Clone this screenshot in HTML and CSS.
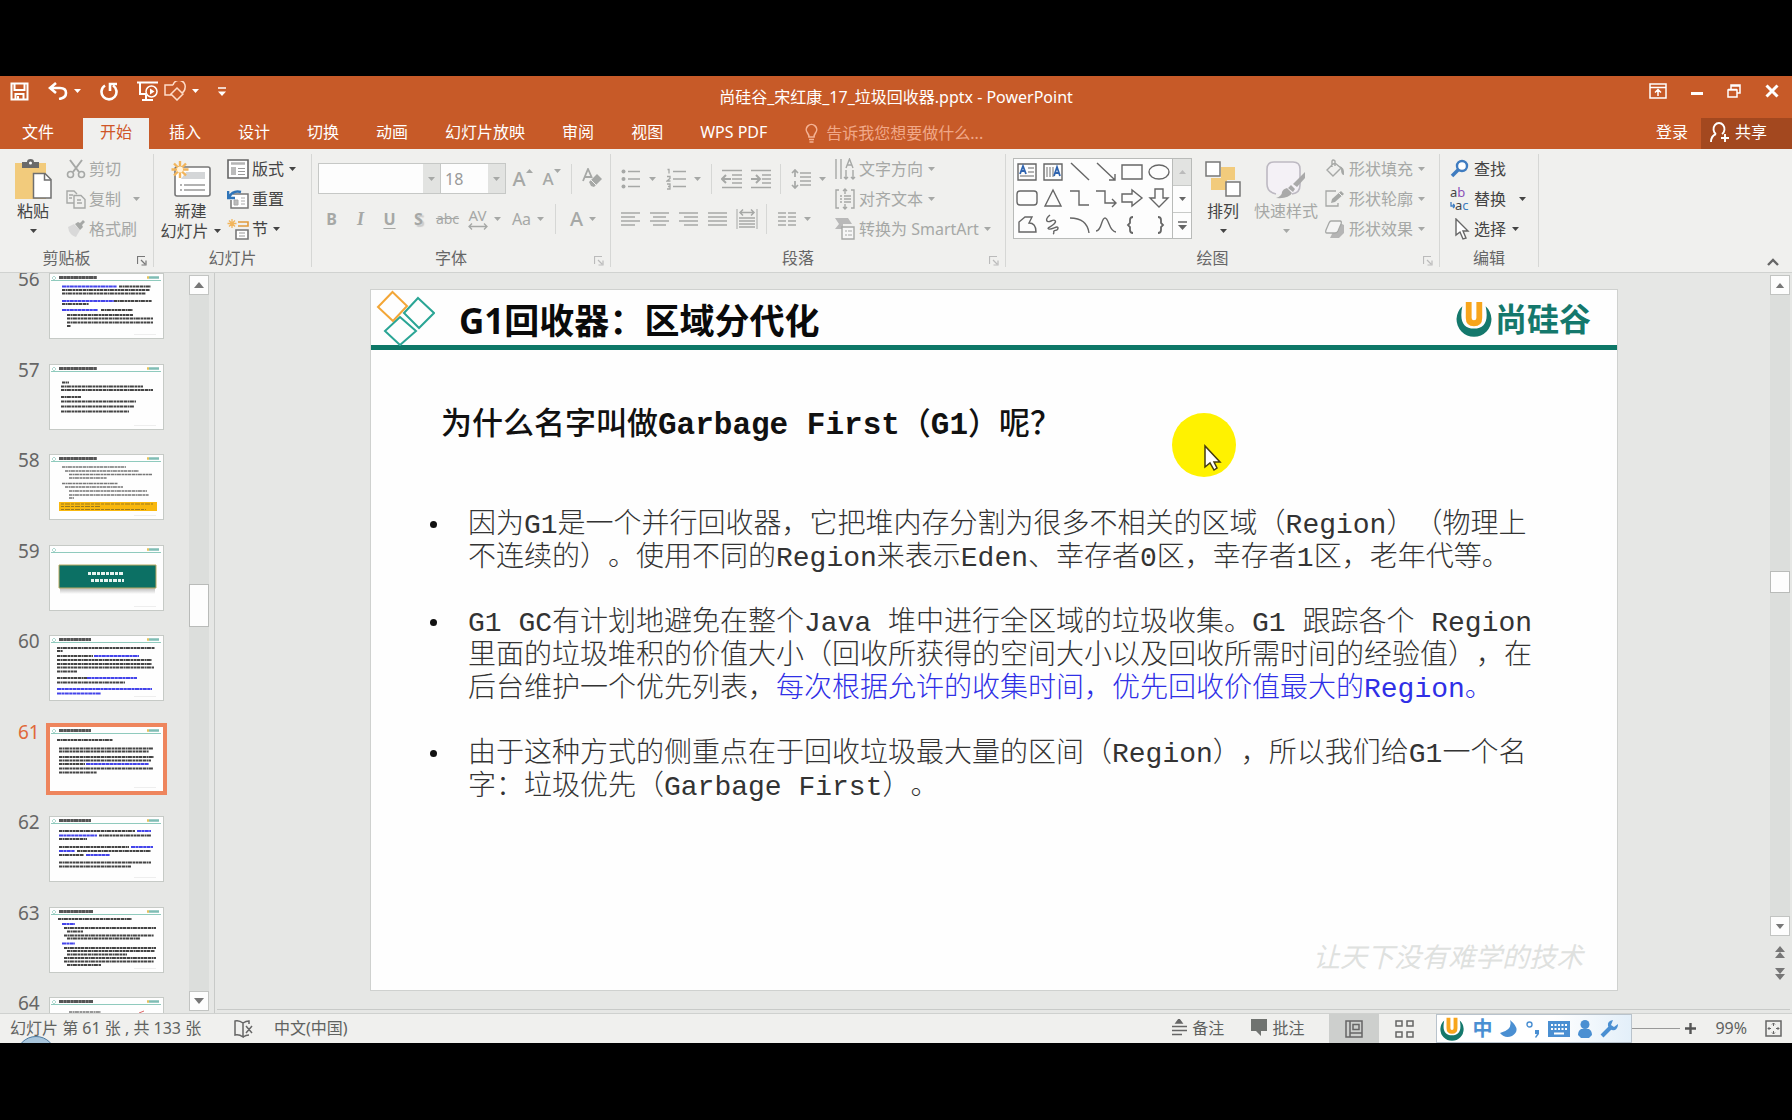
FILE: index.html
```html
<!DOCTYPE html>
<html lang="zh-CN">
<head>
<meta charset="utf-8">
<title>尚硅谷_宋红康_17_垃圾回收器.pptx - PowerPoint</title>
<link rel="stylesheet" href="styles.css">
</head>
<body>
<svg class="defs" aria-hidden="true">
  <symbol id="caret" viewBox="0 0 7 4"><path d="M0 0h7L3.500 4z" fill="currentColor"/></symbol>
  <symbol id="launch" viewBox="0 0 10 10"><path d="M.5 8V.5H8M4 4l4 4M9 4.500V9H4.500" fill="none" stroke="currentColor" stroke-width="1.200"/></symbol>
  <symbol id="tri-up" viewBox="0 0 10 6"><path d="M0 6h10L5 0z" fill="currentColor"/></symbol>
  <symbol id="tri-down" viewBox="0 0 10 6"><path d="M0 0h10L5 6z" fill="currentColor"/></symbol>
  <symbol id="ulogo" viewBox="0 0 34 34"><path d="M6 5A16.500 16.500 0 1 0 28 5C31 19 27 26 17 26S3 19 6 5z" fill="#14786c"/><path d="M12 1v15q0 5 5 5t5-5V1" fill="none" stroke="#f7a51c" stroke-width="5.500"/></symbol>
  <symbol id="thead" viewBox="0 0 115 66"><path d="M2 7.500h110" stroke="#8fcabd"/><path d="M3 5l2-2 2 2-2 2z" fill="none" stroke="#8fcabd" stroke-width=".7"/><path d="M98 4.500h2" stroke="#e3c25a" stroke-width="2.500"/><path d="M100 4.500h10" stroke="#7fbdb4" stroke-width="2.500"/><path d="M85 61.500h22" stroke="#eee"/></symbol>
</svg>

<div class="app">
  <header class="titlebar">
    <div class="qat">
      <button aria-label="保存"><svg width="19" height="19" viewBox="0 0 19 19"><path d="M1.500 1.500h16v16h-16zM4.500 2v6h10V2M5.500 17v-5h8v5M8 14v3" fill="none" stroke="#fff" stroke-width="2"/></svg></button>
      <div class="pair">
        <button aria-label="撤消"><svg width="20" height="18" viewBox="0 0 20 18"><path d="M8 1L2 6l6 5M2 6h10q6 0 6 5t-7 6" fill="none" stroke="#fff" stroke-width="2.600"/></svg></button>
        <svg class="caret"><use href="#caret"/></svg>
      </div>
      <button aria-label="重复"><svg width="18" height="19" viewBox="0 0 18 19"><path d="M5 3.500a7.500 7.500 0 1 0 8 0M10 9V2h7" fill="none" stroke="#fff" stroke-width="2.600"/></svg></button>
      <div class="pair">
        <button aria-label="从头开始"><svg width="21" height="20" viewBox="0 0 21 20"><path d="M0 1.500h21M3 2v11h6M9 14v4M5 19h11" fill="none" stroke="#fff" stroke-width="2"/><circle cx="14.500" cy="10.500" r="5.500" fill="#c75a28" stroke="#fff" stroke-width="1.500"/><path d="M13 7.500v6l4.500-3z" fill="#fff"/></svg></button>
        <button aria-label="形状"><svg width="22" height="20" viewBox="0 0 22 20"><path d="M8 14H1V4h8M9 4a6 6 0 0 1 12 3q0 3-3 5M13 7l6 6-6 6-6-6z" fill="none" stroke="#ffdcc8" stroke-width="1.500"/></svg></button>
        <svg class="caret"><use href="#caret"/></svg>
      </div>
      <button aria-label="自定义快速访问工具栏"><svg width="8" height="9" viewBox="0 0 8 9"><path d="M0 1h8" stroke="#fff" stroke-width="1.500"/><path d="M0 4.500h8L4 9z" fill="#fff"/></svg></button>
    </div>
    <h1 class="doc-title">尚硅谷_宋红康_17_垃圾回收器.pptx - PowerPoint</h1>
    <div class="win-buttons">
      <button aria-label="功能区显示选项"><svg width="18" height="16" viewBox="0 0 18 16"><path d="M1 1h16v14H1zM1 4.500h16M9 13V7M6 9.500l3-3 3 3" fill="none" stroke="#fff" stroke-width="1.500"/></svg></button>
      <button aria-label="最小化"><svg width="12" height="16" viewBox="0 0 12 16"><path d="M0 10.500h12" stroke="#fff" stroke-width="3"/></svg></button>
      <button aria-label="还原"><svg width="14" height="14" viewBox="0 0 14 14"><path d="M1 6h9v7H1zM1 5.500h9M4 5V1h9v8h-3M4 2h9" fill="none" stroke="#fff" stroke-width="1.500"/></svg></button>
      <button aria-label="关闭"><svg width="14" height="14" viewBox="0 0 14 14"><path d="M1.500 1.500l11 11M12.500 1.500l-11 11" stroke="#fff" stroke-width="3"/></svg></button>
    </div>
  </header>

  <nav class="tabs">
    <button class="tab file">文件</button>
    <button class="tab active">开始</button>
    <button class="tab">插入</button>
    <button class="tab">设计</button>
    <button class="tab">切换</button>
    <button class="tab">动画</button>
    <button class="tab">幻灯片放映</button>
    <button class="tab">审阅</button>
    <button class="tab">视图</button>
    <button class="tab">WPS PDF</button>
    <label class="tell">
      <svg width="13" height="20" viewBox="0 0 13 20"><path d="M4 14q0-2-1.500-4a5.200 5.200 0 1 1 8 0Q9 12 9 14zM4 16.500h5M4.500 19h4" fill="none" stroke="#f4b294" stroke-width="1.600"/></svg>
      <input type="text" placeholder="告诉我您想要做什么..." aria-label="告诉我您想要做什么">
    </label>
    <button class="login">登录</button>
    <button class="share"><svg width="20" height="22" viewBox="0 0 20 22"><path d="M1 21q0-6 5-8M6 13a5.500 6 0 1 1 6 0M15 13v8M11 17h8" fill="none" stroke="#fff" stroke-width="1.900"/></svg>共享</button>
  </nav>

  <section class="ribbon">
    <div class="group clipboard">
      <div class="group-body">
        <button class="big"><svg width="38" height="40" viewBox="0 0 38 40"><path d="M1 4h31v37H1z" fill="#f2cb7c"/><path d="M8 3h5q0-3 3.500-3T20 3h5v6H8z" fill="#6a6a6a"/><circle cx="16.500" cy="4" r="1.500" fill="#fff"/><path d="M19.500 14.500H31l6 6V39H19.500z" fill="#fff" stroke="#6f6f6f" stroke-width="1.500"/><path d="M30.500 15v6H37" fill="none" stroke="#6f6f6f" stroke-width="1.500"/></svg><span>粘贴</span><span class="drop"><svg class="caret"><use href="#caret"/></svg></span></button>
        <div class="smalls">
          <button class="small off"><svg width="20" height="20" viewBox="0 0 20 20"><path d="M4 1l9 12M16 1L7 13" fill="none" stroke="currentColor" stroke-width="2"/><circle cx="4.500" cy="15.500" r="3" fill="none" stroke="currentColor" stroke-width="1.600"/><circle cx="15.500" cy="15.500" r="3" fill="none" stroke="currentColor" stroke-width="1.600"/></svg>剪切</button>
          <button class="small off spread"><svg width="20" height="20" viewBox="0 0 20 20"><path d="M8 14H1V2h7l3 3M8 6.500h7l4 4V19H8zM3 6h4M3 9h3M11 11h4M11 14h5" fill="none" stroke="currentColor" stroke-width="1.400"/></svg>复制<svg class="caret"><use href="#caret"/></svg></button>
          <button class="small off"><svg width="20" height="20" viewBox="0 0 20 20"><path d="M2 8l6-3 6 6-4 7q-7-2-8-10z" fill="#d9d9d9"/><path d="M9 5l5 6 3-3-1-2 3-3-2-2-3 3-2-1z" fill="currentColor"/></svg>格式刷</button>
        </div>
      </div>
      <div class="group-label"><span>剪贴板</span><svg class="launch dark"><use href="#launch"/></svg></div>
    </div>

    <div class="group slides">
      <div class="group-body">
        <button class="big"><svg width="40" height="36" viewBox="0 0 40 36"><rect x="4" y="6" width="35" height="29" rx="2" fill="#fff" stroke="#777" stroke-width="1.600"/><path d="M15 11h19v7H10z" fill="#d4d6d8"/><path d="M9 24h2M13 24h21M9 29h2M13 29h21" stroke="#999" stroke-width="1.400"/><path d="M9 0v17M.5 8.500h17M3 2.500l12 12M15 2.500l-12 12" stroke="#f2b55c" stroke-width="2.400"/><circle cx="9" cy="8.500" r="3" fill="#fff3dc"/></svg><span>新建</span><span class="drop">幻灯片<svg class="caret"><use href="#caret"/></svg></span></button>
        <div class="smalls">
          <button class="small"><svg width="22" height="20" viewBox="0 0 22 20"><path d="M1 1h20v18H1z" fill="#fff" stroke="#666" stroke-width="1.600"/><path d="M4 4.500h14" stroke="#b5b5b5" stroke-width="2.500"/><path d="M4 8h5v8H4z" fill="#bbb"/><path d="M11 9.500h7M11 12.500h7M11 15.500h7" stroke="#999" stroke-width="1.200"/></svg>版式<svg class="caret"><use href="#caret"/></svg></button>
          <button class="small"><svg width="22" height="20" viewBox="0 0 22 20"><path d="M6 5h15v14H4v-8" fill="#fff" stroke="#777" stroke-width="1.500"/><path d="M7 11h4v5H7zM14 9h4M14 12h4M14 15h4" fill="#bbb" stroke="#aaa"/><path d="M1 2v7h7M2 8q4-7 12-5" fill="none" stroke="#2f74b8" stroke-width="2.600"/></svg>重置</button>
          <button class="small"><svg width="22" height="22" viewBox="0 0 22 22"><path d="M5 1v9M.5 5.500h9M2 2.500l6 6M8 2.500l-6 6" stroke="#f2b55c" stroke-width="1.300"/><path d="M11 4h10v4H11" fill="none" stroke="#e09a3c" stroke-width="1.600"/><path d="M9 12h12v9H9z" fill="#fff" stroke="#777" stroke-width="1.600"/><path d="M12 15h6M12 18h6" stroke="#999"/></svg>节<svg class="caret"><use href="#caret"/></svg></button>
        </div>
      </div>
      <div class="group-label"><span>幻灯片</span></div>
    </div>

    <div class="group font">
      <div class="group-body rows off">
        <div class="row">
          <label class="combo face"><select aria-label="字体"><option></option></select><span><svg class="caret"><use href="#caret"/></svg></span></label>
          <label class="combo size"><select aria-label="字号"><option>18</option></select><span><svg class="caret"><use href="#caret"/></svg></span></label>
          <button class="fb" aria-label="增大字号"><b class="grow">A</b><svg class="caret raise" viewBox="0 0 7 4"><path d="M0 4h7L3.500 0z" fill="currentColor"/></svg></button>
          <button class="fb" aria-label="减小字号"><b class="shrink">A</b><svg class="caret raise"><use href="#caret"/></svg></button>
          <i class="sep"></i>
          <button class="fb" aria-label="清除所有格式"><svg width="22" height="22" viewBox="0 0 22 22"><path d="M2 13L7 1l4 9M4 9h6" fill="none" stroke="currentColor" stroke-width="1.800"/><path d="M8 14l8-8 5 5-8 8-3-1z" fill="currentColor"/><path d="M10 12l5 5" stroke="#f0f0ee"/></svg></button>
        </div>
        <div class="row marks">
          <button class="fb"><b>B</b></button>
          <button class="fb"><i class="ital">I</i></button>
          <button class="fb"><b class="under">U</b></button>
          <button class="fb"><b class="shadow">S</b></button>
          <button class="fb"><s>abc</s></button>
          <button class="fb wide"><span class="spacing">AV<svg width="20" height="7" viewBox="0 0 20 7"><path d="M1 3.500h18M4 .5l-3 3 3 3M16 .5l3 3-3 3" fill="none" stroke="currentColor" stroke-width="1.300"/></svg></span><svg class="caret"><use href="#caret"/></svg></button>
          <button class="fb wide">Aa<svg class="caret"><use href="#caret"/></svg></button>
          <i class="sep"></i>
          <button class="fb wide"><b class="grow">A</b><svg class="caret"><use href="#caret"/></svg></button>
        </div>
      </div>
      <div class="group-label"><span>字体</span><svg class="launch"><use href="#launch"/></svg></div>
    </div>

    <div class="group para">
      <div class="group-body off">
        <div class="rows">
          <div class="row">
            <button class="pb list" aria-label="项目符号"><svg width="20" height="20" viewBox="0 0 20 20"><path d="M7 2.500h12M7 10h12M7 17.500h12" stroke="currentColor" stroke-width="1.500"/><circle cx="2.500" cy="2.500" r="2" fill="currentColor"/><circle cx="2.500" cy="10" r="2" fill="currentColor"/><circle cx="2.500" cy="17.500" r="2" fill="currentColor"/></svg><svg class="caret"><use href="#caret"/></svg></button>
            <button class="pb list" aria-label="编号"><svg width="20" height="22" viewBox="0 0 20 22"><path d="M7 3.500h13M7 11h13M7 18.500h13M1.500 1.500H3v4M1 8.500h3v2L1 13h3.500M1 16h3v5H1M2 18.500h2" fill="none" stroke="currentColor" stroke-width="1.300"/></svg><svg class="caret"><use href="#caret"/></svg></button>
            <i class="sep"></i>
            <button class="pb" aria-label="降低列表级别"><svg width="22" height="20" viewBox="0 0 22 20"><path d="M1 1.500h20M11 6h10M11 10h10M11 14h10M1 18.500h20" stroke="currentColor" stroke-width="1.500"/><path d="M10 10H2M5 6l-4 4 4 4" fill="none" stroke="currentColor" stroke-width="2"/></svg></button>
            <button class="pb" aria-label="提高列表级别"><svg width="22" height="20" viewBox="0 0 22 20"><path d="M1 1.500h20M12 6h9M12 10h9M12 14h9M1 18.500h20" stroke="currentColor" stroke-width="1.500"/><path d="M1 10h8M6 6l4 4-4 4" fill="none" stroke="currentColor" stroke-width="2"/></svg></button>
            <i class="sep"></i>
            <button class="pb list" aria-label="行距"><svg width="20" height="20" viewBox="0 0 20 20"><path d="M9 4h11M9 8h11M9 12h11M9 16h11" stroke="currentColor" stroke-width="1.400"/><path d="M4 1v7M1 4l3-3 3 3M4 19v-7M1 16l3 3 3-3" fill="none" stroke="currentColor" stroke-width="1.700"/></svg><svg class="caret"><use href="#caret"/></svg></button>
          </div>
          <div class="row">
            <button class="pb" aria-label="左对齐"><svg width="20" height="14" viewBox="0 0 20 14"><path d="M0 1h19M0 5h14M0 9h19M0 13h14" stroke="currentColor" stroke-width="1.500"/></svg></button>
            <button class="pb" aria-label="居中"><svg width="20" height="14" viewBox="0 0 20 14"><path d="M0 1h19M3 5h13M0 9h19M3 13h13" stroke="currentColor" stroke-width="1.500"/></svg></button>
            <button class="pb" aria-label="右对齐"><svg width="20" height="14" viewBox="0 0 20 14"><path d="M0 1h19M5 5h14M0 9h19M5 13h14" stroke="currentColor" stroke-width="1.500"/></svg></button>
            <button class="pb" aria-label="两端对齐"><svg width="20" height="14" viewBox="0 0 20 14"><path d="M0 1h19M0 5h19M0 9h19M0 13h19" stroke="currentColor" stroke-width="1.500"/></svg></button>
            <button class="pb" aria-label="分散对齐"><svg width="22" height="20" viewBox="0 0 22 20"><path d="M1 0v20M21 0v20" stroke="currentColor"/><path d="M4 3.500h14M7 .5l-3 3 3 3M15 .5l3 3-3 3M3 9h16M3 12h16M3 15h16M3 18h16" fill="none" stroke="currentColor" stroke-width="1.500"/></svg></button>
            <i class="sep"></i>
            <button class="pb list" aria-label="分栏"><svg width="18" height="14" viewBox="0 0 18 14"><path d="M0 1h8M0 5h8M0 9h8M0 13h8M10 1h8M10 5h8M10 9h8M10 13h8" stroke="currentColor" stroke-width="1.500"/></svg><svg class="caret"><use href="#caret"/></svg></button>
          </div>
        </div>
        <div class="smalls">
          <button class="small off"><svg width="20" height="22" viewBox="0 0 20 22"><path d="M1 1v20M6 1v20M11 12v9M18 12v9M9 19l2 2 2-2M16 19l2 2 2-2M11 10l3.500-9L18 10M12 7h5" fill="none" stroke="currentColor" stroke-width="1.400"/></svg>文字方向<svg class="caret"><use href="#caret"/></svg></button>
          <button class="small off"><svg width="20" height="22" viewBox="0 0 20 22"><path d="M4 2H1v18h3M16 2h3v18h-3M5 8h2M9 8h7M5 11h2M9 11h7M5 14h2M9 14h7M10 6V1M8 3l2-2 2 2M10 16v5M8 19l2 2 2-2" fill="none" stroke="currentColor" stroke-width="1.400"/></svg>对齐文本<svg class="caret"><use href="#caret"/></svg></button>
          <button class="small off"><svg width="20" height="22" viewBox="0 0 20 22"><path d="M0 0h13l4 6H8v5H0l4-5z" fill="#b9b9b9"/><path d="M7 9h12v12H7z" fill="#f6f6f6" stroke="currentColor" stroke-width="1.400"/><path d="M10 13h2M13 13h4M10 17h2M13 17h4" stroke="currentColor"/></svg>转换为 SmartArt<svg class="caret"><use href="#caret"/></svg></button>
        </div>
      </div>
      <div class="group-label"><span>段落</span><svg class="launch"><use href="#launch"/></svg></div>
    </div>

    <div class="group draw">
      <div class="group-body">
        <div class="gallery">
          <div class="shapes">
            <svg viewBox="0 0 26 26"><path d="M4 5h18v16H4z"/><path d="M14 9h6M14 13h6M6 17h14" stroke="#999"/><path d="M6 15l3-8 3 8M7 12h4" stroke="#2f64b0" stroke-width="1.800"/></svg>
            <svg viewBox="0 0 26 26"><path d="M4 5h18v16H4z"/><path d="M7 8v10M10 8v10M13 8v10" stroke="#999"/><path d="M14 17l3-9 3 9M15 14h4" stroke="#2f64b0" stroke-width="1.800"/></svg>
            <svg viewBox="0 0 26 26"><path d="M4 4l18 17"/></svg>
            <svg viewBox="0 0 26 26"><path d="M4 4l18 17M22 15v6h-6"/></svg>
            <svg viewBox="0 0 26 26"><path d="M3 6h20v14H3z"/></svg>
            <svg viewBox="0 0 26 26"><ellipse cx="13" cy="13" rx="10" ry="7"/></svg>
            <svg viewBox="0 0 26 26"><rect x="3" y="6" width="20" height="14" rx="3"/></svg>
            <svg viewBox="0 0 26 26"><path d="M13 5l8 16H5z"/></svg>
            <svg viewBox="0 0 26 26"><path d="M3 6h9v14h10"/></svg>
            <svg viewBox="0 0 26 26"><path d="M3 6h9v12h10M19 14l4 4-4 4"/></svg>
            <svg viewBox="0 0 26 26"><path d="M3 9h10V5l10 8-10 8v-4H3z"/></svg>
            <svg viewBox="0 0 26 26"><path d="M9 4h8v9h5l-9 9-9-9h5z"/></svg>
            <svg viewBox="0 0 26 26"><path d="M5 20V10l6-5h7l-3 6q7 0 7 9z"/></svg>
            <svg viewBox="0 0 26 26"><path d="M10 3C4 8 7 11 11 9s6 0 3 3-8 4-5 5 9-4 9-1-3 2-4 3 1 2-1 3"/></svg>
            <svg viewBox="0 0 26 26"><path d="M3 6q17 0 19 15"/></svg>
            <svg viewBox="0 0 26 26"><path d="M3 19C9 19 8 6 12 6s4 14 11 14"/></svg>
            <svg viewBox="0 0 26 26"><path d="M14 5q-3 0-3 3v3l-2 2 2 2v3q0 3 3 3" stroke-width="1.800"/></svg>
            <svg viewBox="0 0 26 26"><path d="M12 5q3 0 3 3v3l2 2-2 2v3q0 3-3 3" stroke-width="1.800"/></svg>
          </div>
          <div class="gal-scroll">
            <button class="dim" aria-label="上一行"><svg class="caret" viewBox="0 0 7 4"><path d="M0 4h7L3.500 0z" fill="currentColor"/></svg></button>
            <button aria-label="下一行"><svg class="caret"><use href="#caret"/></svg></button>
            <button aria-label="其他"><svg width="9" height="9" viewBox="0 0 9 9"><path d="M0 1h9" stroke="#666" stroke-width="1.500"/><path d="M0 4h9L4.500 9z" fill="#666"/></svg></button>
          </div>
        </div>
        <button class="big arrange"><svg width="36" height="36" viewBox="0 0 36 36"><path d="M16 6h14v13h-8v10H6V17h10z" fill="#f2cb7c"/><path d="M1 1h14v14H1zM21 21h14v14H21z" fill="#fff" stroke="#777" stroke-width="1.500"/></svg><span>排列</span><span class="drop"><svg class="caret"><use href="#caret"/></svg></span></button>
        <button class="big quick off"><svg width="40" height="38" viewBox="0 0 40 38"><path d="M10 34q-9-2-9-10V9q0-7 7-7h19q7 0 7 7v16q0 8-8 9" fill="#f4f1f6" stroke="#bdb9c2" stroke-width="1.600"/><path d="M39 12L27 24l4 3 8-9z" fill="#a9a9a9"/><path d="M25 25l4 4-2 3-5-4zM21 28l5 5q-3 6-16 5 6-2 6-6 1-3 5-4z" fill="#a9a9a9"/></svg><span>快速样式</span><span class="drop"><svg class="caret"><use href="#caret"/></svg></span></button>
        <div class="smalls">
          <button class="small off"><svg width="22" height="20" viewBox="0 0 22 20"><path d="M9 5L3 11l6 6 8-8-6-5zM8 8V2q1-2 3 0v5" fill="none" stroke="currentColor" stroke-width="1.400"/><path d="M15 7q6 1 5 9-3 0-3-6z" fill="currentColor"/></svg>形状填充<svg class="caret"><use href="#caret"/></svg></button>
          <button class="small off"><svg width="22" height="20" viewBox="0 0 22 20"><path d="M12 2H2v15h12v-3" fill="none" stroke="currentColor" stroke-width="1.300"/><path d="M7 14l1-4 9-8 3 3-9 8z" fill="currentColor"/><path d="M15 4l3 3" stroke="#f0f0ee"/></svg>形状轮廓<svg class="caret"><use href="#caret"/></svg></button>
          <button class="small off"><svg width="22" height="20" viewBox="0 0 22 20"><path d="M14 3l6 3v8l-5 5H6z" fill="#b5b5b5"/><path d="M7 2h9q2 0 1 3l-3 7q-1 2-3 2H3q-2 0-1-3l3-7q1-2 2-2z" fill="#f4f4f4" stroke="currentColor" stroke-width="1.300"/></svg>形状效果<svg class="caret"><use href="#caret"/></svg></button>
        </div>
      </div>
      <div class="group-label"><span>绘图</span><svg class="launch"><use href="#launch"/></svg></div>
    </div>

    <div class="group edit">
      <div class="group-body">
        <div class="smalls">
          <button class="small"><svg width="20" height="20" viewBox="0 0 20 20"><circle cx="12" cy="7" r="5" fill="#fff" stroke="#3f7cc0" stroke-width="2.400"/><path d="M8.500 10.500L2 17" stroke="#3f7cc0" stroke-width="3.600"/></svg>查找</button>
          <button class="small spread"><span class="abac"><span>a<em>b</em></span><span><svg width="5" height="7" viewBox="0 0 5 7"><path d="M1 0v4h3M3 2l2 2-2 2" fill="none" stroke="#3f7cc0" stroke-width="1.300"/></svg>a<em>c</em></span></span>替换<svg class="caret"><use href="#caret"/></svg></button>
          <button class="small"><svg width="20" height="22" viewBox="0 0 20 22"><path d="M6 1v16l4-3 3 7 3-1-3-7h5z" fill="#fff" stroke="#666" stroke-width="1.400"/></svg>选择<svg class="caret"><use href="#caret"/></svg></button>
        </div>
      </div>
      <div class="group-label"><span>编辑</span></div>
    </div>
    <button class="collapse" aria-label="折叠功能区"><svg width="12" height="8" viewBox="0 0 12 8"><path d="M1 7l5-5 5 5" fill="none" stroke="#666" stroke-width="2.400"/></svg></button>
  </section>

  <main class="work">
    <aside class="thumbs">
      <div class="thumb-view">
        <ol class="thumb-list">
          <li><span>56</span><svg viewBox="0 0 115 66"><use href="#thead"/><path class="th" d="M10 4.500h38"/><path class="tb" d="M13 13.500h55M13 28h54M13 37h36"/><path class="tk" d="M70 13.500h32M13 17h88M13 20.500h84M65 28h38M13 31h27M52 37h32M18 42h66M18 45.500h86M18 49.500h86M18 53h4"/></svg></li>
          <li><span>57</span><svg viewBox="0 0 115 66"><use href="#thead"/><path class="th" d="M10 4.500h38"/><path class="tk" d="M13 18.500h7M12 22.500h82M12 26h92M12 33h20M12 37.500h75M12 42.500h73M12 47.500h68"/></svg></li>
          <li><span>58</span><svg viewBox="0 0 115 66"><use href="#thead"/><path class="th" d="M10 4.500h38"/><path class="tk thin" d="M13 13h64M16 17h74M20 20.500h83M20 24h38M13 29.500h56M16 33h58M20 37h78M20 41h80M20 44h5"/><path d="M10 48h98v9H10z" fill="#f9b80e"/><path class="tg" d="M12 50h92M12 52.500h40M12 55.500h85"/></svg></li>
          <li><span>59</span><svg viewBox="0 0 115 66"><defs><linearGradient id="fade" x2="0" y2="1"><stop stop-color="#bbb"/><stop offset="1" stop-color="#fefefe"/></linearGradient></defs><use href="#thead"/><path d="M11 43h95v6H11z" fill="url(#fade)"/><path d="M10 20h97v23H10z" fill="#0c7064" stroke="#b8a860"/><path class="tw" d="M39 28.500h36M42 35.500h33"/></svg></li>
          <li><span>60</span><svg viewBox="0 0 115 66"><use href="#thead"/><path class="th" d="M10 4.500h32"/><path class="tk" d="M8 13h98M8 16h6M8 21h36M8 25h95M8 29h95M8 32.500h97M8 36.500h20M8 43h30M8 47.500h68"/><path class="tb" d="M45 21h45M38 43h50M8 54h95M8 58.500h44"/></svg></li>
          <li class="current"><span>61</span><svg viewBox="0 0 115 66"><use href="#thead"/><path class="th" d="M10 4.500h32"/><path class="tk" d="M8 14h56M10 22.500h94M10 25.500h90M10 31h95M10 34.500h92M10 38h26M10 42.500h94M10 46.500h38"/><path class="tb" d="M37 38h63"/></svg></li>
          <li><span>62</span><svg viewBox="0 0 115 66"><use href="#thead"/><path class="th" d="M10 4.500h32"/><path class="tk" d="M10 15h76M50 19.500h52M10 23h28M10 31h70M28 35h74M10 39h25M10 46.500h92M10 50.500h72"/><path class="tb" d="M88 15h14M10 19.500h38M82 31h22M10 35h16M37 39h24"/></svg></li>
          <li><span>63</span><svg viewBox="0 0 115 66"><use href="#thead"/><path class="th" d="M10 4.500h34"/><path class="tk" d="M9 12h74M15 21h92M18 24.500h16M15 28.500h90M18 31.500h73M15 41h92M18 44h88M18 47.500h60M15 51h92M15 54.500h90M18 58h34"/><path class="tb" d="M13 17h13M13 36.500h13"/></svg></li>
          <li><span>64</span><svg viewBox="0 0 115 66"><use href="#thead"/><path class="th" d="M10 4.500h34"/><path class="tk thin" d="M20 15h32"/><path d="M90 16l5-2" stroke="#d66"/></svg></li>
        </ol>
      </div>
      <div class="vscroll left"><button aria-label="向上"><svg width="10" height="6"><use href="#tri-up"/></svg></button><i class="knob"></i><button aria-label="向下"><svg width="10" height="6"><use href="#tri-down"/></svg></button></div>
    </aside>

    <section class="editor">
      <div class="canvas">
        <article class="slide">
          <header class="slide-head">
            <svg width="64" height="56" viewBox="0 0 64 56"><path d="M21.500 2L36 16 22 31 7 17z" fill="none" stroke="#f3a636" stroke-width="2"/><path d="M47 8l16 15-15 15-15-15z" fill="#fefefe" stroke="#2aa595" stroke-width="2"/><path d="M29 27l16 14-16 14-15-14z" fill="#fefefe" stroke="#2aa595" stroke-width="2"/></svg>
            <h2>G1回收器<span class="colon">：</span>区域分代化</h2>
            <div class="brand"><svg width="36" height="36"><use href="#ulogo"/></svg>尚硅谷</div>
          </header>
          <h3>为什么名字叫做<b>Garbage First</b>（<b>G1</b>）呢？</h3>
          <ul>
            <li>因为G1是一个并行回收器，它把堆内存分割为很多不相关的区域（Region）（物理上<br>不连续的）。使用不同的Region来表示Eden、幸存者0区，幸存者1区，老年代等。</li>
            <li>G1 GC有计划地避免在整个Java 堆中进行全区域的垃圾收集。G1 跟踪各个 Region<br>里面的垃圾堆积的价值大小（回收所获得的空间大小以及回收所需时间的经验值），在<br>后台维护一个优先列表，<em>每次根据允许的收集时间，优先回收价值最大的Region。</em></li>
            <li>由于这种方式的侧重点在于回收垃圾最大量的区间（Region），所以我们给G1一个名<br>字：垃圾优先（Garbage First）。</li>
          </ul>
          <footer>让天下没有难学的技术</footer>
          <div class="pointer"><svg width="20" height="28" viewBox="0 0 20 28"><path d="M2 2v21l5-4 4 7 3-2-3-6h6z" fill="#fff" stroke="#443b10" stroke-width="1.500"/></svg></div>
        </article>
        <div class="right-rail">
          <div class="vscroll right"><button aria-label="向上"><svg width="10" height="5"><use href="#tri-up"/></svg></button><i class="knob"></i><button aria-label="向下"><svg width="10" height="5"><use href="#tri-down"/></svg></button></div>
          <button aria-label="上一张幻灯片"><svg width="10" height="12" viewBox="0 0 10 12"><path d="M5 0l5 6H0zM5 6l5 6H0z" fill="#777"/></svg></button>
          <button aria-label="下一张幻灯片"><svg width="10" height="12" viewBox="0 0 10 12"><path d="M0 0h10L5 6zM0 6h10l-5 6z" fill="#777"/></svg></button>
        </div>
      </div>
    </section>
  </main>

  <footer class="status">
    <span class="count">幻灯片 第 61 张 , 共 133 张</span>
    <svg width="20" height="18" viewBox="0 0 20 18"><path d="M9 3Q5 0 1 1v14q4-1 8 2zM9 3q3-2 6-2v3M9 17q3-2 6-2M12 6l6 7M18 6l-6 7" fill="none" stroke="#666" stroke-width="1.500"/></svg>
    <span class="lang">中文(中国)</span>
    <i class="orb"></i>
    <div class="status-right">
      <button class="note"><svg width="15" height="17" viewBox="0 0 15 17"><path d="M7 0l3 4H4zM0 7.500h15M0 11.500h15M0 15.500h10" fill="#666" stroke="#666" stroke-width="1.400"/></svg>备注</button>
      <button class="note comment"><svg width="16" height="17" viewBox="0 0 16 17"><path d="M0 0h16v12h-6v5l-5-5H0z" fill="#707370"/></svg>批注</button>
      <button class="view on" aria-label="普通视图"><svg width="18" height="18" viewBox="0 0 18 18"><path d="M1 1h16v16H1zM5 1v16M8 4.500h6v5H8zM5 13h12" fill="none" stroke="#666" stroke-width="1.500"/></svg></button>
      <button class="view" aria-label="幻灯片浏览"><svg width="19" height="18" viewBox="0 0 19 18"><path d="M1 1h6v5H1zM12 1h6v5h-6zM1 12h6v5H1zM12 12h6v5h-6z" fill="none" stroke="#666" stroke-width="1.500"/></svg></button>
      <div class="ime">
        <svg width="24" height="24"><use href="#ulogo"/></svg>
        <b>中</b>
        <svg width="18" height="18" viewBox="0 0 18 18"><path d="M10 0q3 10-10 13 5 6 12 3 10-6-2-16z" fill="#4a8fd2"/></svg>
        <svg width="14" height="18" viewBox="0 0 14 18"><circle cx="3.500" cy="4.500" r="2.500" fill="none" stroke="#4a8fd2" stroke-width="1.400"/><path d="M9 10h4v4l-3 4-1-1 2-3H9z" fill="#4a8fd2"/></svg>
        <svg width="22" height="16" viewBox="0 0 22 16"><path d="M0 0h22v16H0z" fill="#4a8fd2"/><path d="M3 4h16M3 8h16" stroke="#fff" stroke-width="2" stroke-dasharray="2 1.500"/><path d="M6 12.500h10" stroke="#fff" stroke-width="2"/></svg>
        <svg width="14" height="18" viewBox="0 0 14 18"><circle cx="7" cy="4.500" r="4.500" fill="#4a8fd2"/><path d="M3 9h8q3 2 3 6l-3 3H3l-3-3q0-4 3-6z" fill="#4a8fd2"/></svg>
        <svg width="18" height="18" viewBox="0 0 18 18"><path d="M2 16l8-8" stroke="#4a8fd2" stroke-width="4"/><path d="M13 0q-6 1-5 6 2 5 7 4 3-2 3-6l-4 3-3-2z" fill="#4a8fd2"/></svg>
      </div>
      <input class="zoom" type="range" aria-label="缩放">
      <button class="plus" aria-label="放大"><svg width="11" height="11" viewBox="0 0 11 11"><path d="M5.500 0v11M0 5.500h11" stroke="#555" stroke-width="2.400"/></svg></button>
      <span class="pct">99%</span>
      <button class="fit" aria-label="使幻灯片适应当前窗口"><svg width="17" height="17" viewBox="0 0 17 17"><path d="M1 1h15v15H1z" fill="none" stroke="#666" stroke-width="1.500"/><path d="M8.500 3v3M8.500 11v3M3 8.500h3M11 8.500h3M7 4.500L8.500 3 10 4.500M7 12.500L8.500 14l1.500-1.500M4.500 7L3 8.500 4.500 10M12.500 7L14 8.500 12.500 10" fill="none" stroke="#666"/></svg></button>
    </div>
  </footer>
</div>
</body>
</html>
```

FILE: styles.css
```css
* { box-sizing: border-box; }

body {
  margin: 0;
  height: 100vh;
  padding: 76px 0 77px;
  background: #000;
  color: #444;
  font: 16px/20px "Noto Sans", "Noto Sans CJK SC", sans-serif;
  text-spacing-trim: space-all;
}

button {
  margin: 0;
  padding: 0;
  border: 0;
  background: none;
  color: inherit;
  font: inherit;
  white-space: nowrap;
  display: flex;
  align-items: center;
}

svg { display: block; flex: none; }
.defs { position: absolute; width: 0; height: 0; }
.caret { width: 7px; height: 4px; }
.off { color: #a6a8a6; }

.app {
  height: 100%;
  display: flex;
  flex-direction: column;
  background: #e6e7e5;
  overflow: hidden;
}

/* Title bar */
.titlebar {
  display: grid;
  grid-template-columns: 1fr auto 1fr;
  height: 42px;
  flex: none;
  background: #c75a28;
  color: #fff;
}
.qat, .win-buttons { display: flex; align-items: center; height: 30px; }
.qat { gap: 19px; padding-left: 10px; }
.pair { display: flex; align-items: center; gap: 6px; }
.doc-title { margin: 0; font-size: 16px; font-weight: 400; line-height: 42px; }
.win-buttons { justify-content: flex-end; gap: 24px; padding-right: 13px; }

/* Tabs */
.tabs {
  display: flex;
  height: 31px;
  flex: none;
  background: #c75a28;
  color: #fff;
}
.tab, .login, .share { padding-bottom: 3px; }
.tab { padding-left: 17px; padding-right: 17px; margin-right: 3px; }
.tab.file { padding-left: 22px; padding-right: 22px; margin-right: 7px; }
.tab.active { background: #f0f0ee; color: #cf5527; }
.tell { display: flex; align-items: center; gap: 8px; margin-left: 18px; padding-bottom: 1px; }
.tell input {
  width: 180px;
  border: 0;
  padding: 0;
  background: none;
  font: inherit;
  color: #fff;
}
.tell input::placeholder { color: #f0a888; opacity: 1; }
.login { margin-left: auto; padding-left: 13px; padding-right: 13px; }
.share { width: 91px; padding-left: 9px; gap: 5px; background: #a3481f; }

/* Ribbon */
.ribbon {
  display: flex;
  height: 124px;
  flex: none;
  padding-top: 5px;
  background: #f0f0ee;
  border-bottom: 1px solid #d0d2d0;
}
.group {
  display: flex;
  flex-direction: column;
  flex: none;
  height: 113px;
  border-right: 1px solid #d6d7d5;
}
.clipboard { width: 154px; }
.slides { width: 158px; }
.font { width: 299px; }
.para { width: 395px; }
.draw { width: 434px; }
.edit { width: 99px; }
.group-body { display: flex; height: 90px; flex: none; }
.group-label { display: flex; align-items: center; height: 28px; flex: none; color: #666; }
.group-label span { flex: 1; text-align: center; }
.launch { width: 10px; height: 10px; margin: 6px 6px 0 4px; color: #bbb; }
.launch.dark { color: #777; }

.big {
  flex-direction: column;
  justify-content: flex-start;
  width: 66px;
  padding-top: 5px;
  flex: none;
}
.big > svg { height: 42px; padding-bottom: 2px; }
.big .drop { display: flex; align-items: center; gap: 5px; height: 20px; }
.slides .big { width: 73px; }
.smalls { display: flex; flex-direction: column; }
.small { height: 30px; gap: 3px; padding-bottom: 1px; }
.small > svg:first-child { width: 22px; }
.small > .caret { margin-left: 2px; }
.small.spread > .caret { margin-left: 9px; }
.clipboard .small > svg:first-child { width: 20px; }

.rows { display: flex; flex-direction: column; gap: 9px; padding-top: 9px; }
.row { display: flex; align-items: center; height: 31px; }
.sep { width: 1px; height: 30px; background: #d6d7d5; margin: 0 5px; }

.font .rows { padding-left: 3px; }
.marks { padding-left: 2px; }
.combo {
  display: flex;
  height: 31px;
  border: 1px solid #c6c8c6;
  background: #fdfdfd;
}
.combo.face { width: 123px; margin-left: 3px; }
.combo.size { width: 66px; margin-left: -1px; margin-right: 2px; }
.combo select {
  appearance: none;
  flex: 1;
  min-width: 0;
  border: 0;
  padding: 0 4px;
  background: none;
  font: inherit;
  color: #999;
}
.combo span {
  width: 17px;
  display: flex;
  align-items: center;
  justify-content: center;
  background: #e2e3e1;
}
.fb { width: 29px; height: 30px; justify-content: center; }
.fb.wide { width: 44px; gap: 6px; }
.grow { font-size: 20px; font-weight: 500; }
.shrink { font-size: 17px; font-weight: 500; }
.raise { align-self: flex-start; margin-top: 5px; }
.ital { font-family: "Liberation Serif", serif; font-size: 18px; font-weight: 700; }
.under { text-decoration: underline; text-underline-offset: 3px; }
.shadow { text-shadow: 2px 2px 1px #ccc; }
.fb s { font-size: 14px; }
.spacing { display: flex; flex-direction: column; font-size: 15px; line-height: 16px; }

.para .rows { width: 223px; padding-left: 5px; }
.pb { width: 29px; height: 30px; justify-content: center; }
.pb.list { width: 45px; gap: 8px; }

.gallery {
  display: flex;
  width: 179px;
  height: 81px;
  margin: 4px 4px 0 7px;
  border: 1px solid #b9bbb9;
  background: #fdfdfd;
}
.shapes { flex: 1; display: grid; grid-template-columns: repeat(6, 1fr); }
.shapes svg { width: 26px; height: 26px; fill: none; stroke: #666; stroke-width: 1.4px; }
.gal-scroll { width: 19px; display: grid; grid-template-rows: 1fr 1fr 1fr; border-left: 1px solid #b9bbb9; }
.gal-scroll button { justify-content: center; border-top: 1px solid #c8cac8; color: #666; }
.gal-scroll .dim { border-top: 0; background: #e2e3e1; color: #bbb; }
.arrange { width: 54px; }
.quick { width: 72px; margin-right: 2px; }

.edit .group-body { padding-left: 10px; }
.edit .small > svg:first-child { width: 20px; }
.edit .small { gap: 4px; }
.abac { width: 20px; font-size: 13px; line-height: 13px; display: grid; justify-items: start; }
.abac span { display: flex; align-items: center; }
.abac em { font-style: normal; color: #8a50b8; }
.abac span + span em { color: #3f7cc0; }
.collapse { margin: 104px 13px 0 auto; height: 8px; }

/* Work area */
.work { flex: 1; min-height: 0; display: flex; }
.thumbs {
  display: flex;
  width: 215px;
  flex: none;
  border-right: 1px solid #c8cac8;
}
.thumb-view { flex: 1; overflow: hidden; }
.thumb-list {
  display: flex;
  flex-direction: column;
  justify-content: space-between;
  height: calc(100% + 50px);
  margin: 0;
  padding: 0;
  list-style: none;
}
.thumb-list li { display: flex; gap: 8px; padding-left: 18px; }
.thumb-list span { width: 23px; font-size: 19px; line-height: 12px; color: #666; }
.thumb-list svg { width: 115px; height: 66px; background: #fefefe; outline: 1px solid #c6cac6; outline-offset: -1px; }
.thumb-list .current span { color: #e0693a; }
.thumb-list .current svg { outline: 4px solid #ee855d; outline-offset: -1px; }
.th { stroke: #555; stroke-width: 3px; stroke-dasharray: 4 .3 3 .2; }
.tk { stroke: #444; stroke-width: 2px; stroke-dasharray: 3 .5 2 .4 4 .6; }
.tk.thin { stroke: #777; stroke-width: 1.4px; }
.tb { stroke: #4444ea; stroke-width: 2px; stroke-dasharray: 4 .4 3 .4; }
.tg { stroke: #9a7a20; stroke-width: 1px; stroke-dasharray: 3 1 5 1; }
.tw { stroke: #e8f4f0; stroke-width: 3px; stroke-dasharray: 3 1 4 1; }

.vscroll {
  display: flex;
  flex-direction: column;
  align-items: stretch;
  width: 20px;
  flex: none;
  background: #dcdedc;
}
.vscroll button {
  height: 20px;
  flex: none;
  justify-content: center;
  background: #fdfdfd;
  border: 1px solid #c2c4c2;
  color: #777;
}
.knob { background: #fdfdfd; border: 1px solid #b9bbb9; }
.left { margin: 2px 5px 2px 0; }
.left .knob { height: 43px; margin: 289px 0 auto; }

.editor {
  flex: 1;
  display: flex;
  flex-direction: column;
  padding: 0 2px 3px;
}
.canvas {
  flex: 1;
  display: flex;
  align-items: flex-start;
  border-bottom: 1px solid #c8cac8;
}
.right-rail { display: flex; flex-direction: column; align-items: center; gap: 10px; margin: 2px 0 0 auto; }
.right { height: 661px; }
.right .knob { height: 22px; margin: 276px 0 auto; }

/* Slide */
.slide {
  position: relative;
  flex: 1;
  aspect-ratio: 16 / 9;
  margin: 16px 152px 0 153px;
  background: #fefefe;
  border: 1px solid #cfd1cf;
  white-space: nowrap;
}
.slide-head {
  display: flex;
  align-items: center;
  height: 60px;
  border-bottom: 5px solid #0d7767;
}
.slide-head h2 {
  margin: 0 auto 0 24px;
  padding-top: 4px;
  font-size: 35px;
  line-height: 48px;
  color: #0a0a0a;
}
.colon { font-family: "Noto Sans CJK TC", sans-serif; }
.brand {
  display: flex;
  align-items: center;
  gap: 3px;
  margin-right: 26px;
  padding-top: 2px;
  color: #14786c;
  font-size: 32px;
  font-weight: 700;
  line-height: 40px;
}
.slide h3 {
  margin: 56px 0 0 70px;
  font: 500 31px/40px "Liberation Mono", "Noto Sans CJK SC", monospace;
  color: #111;
}
.slide ul {
  margin: 63px 0 0;
  padding: 0;
  list-style: none;
  font: 400 28px/33px "Liberation Mono", "Noto Sans CJK SC Light", "Noto Sans CJK SC", monospace;
  color: #333;
}
.slide li { display: block; position: relative; padding-left: 97px; margin-bottom: 32px; }
.slide li::before {
  content: "";
  position: absolute;
  left: 59px;
  top: 12px;
  width: 7px;
  height: 7px;
  border-radius: 50%;
  background: #111;
}
.slide em { font-style: normal; color: #2f2fe6; }
.slide footer {
  position: absolute;
  right: 34px;
  bottom: 15px;
  font-size: 27px;
  line-height: 36px;
  font-style: italic;
  color: #dfe1df;
}
.pointer {
  position: absolute;
  left: 801px;
  top: 123px;
  width: 64px;
  height: 64px;
  padding: 31px 0 0 31px;
  border-radius: 50%;
  background: #fff200;
}

/* Status bar */
.status {
  position: relative;
  display: flex;
  align-items: center;
  height: 30px;
  flex: none;
  padding: 0 10px;
  background: #f0f0ee;
  border-top: 1px solid #cfd1cf;
  color: #606260;
  line-height: 22px;
  overflow: hidden;
}
.count { width: 224px; padding-bottom: 2px; }
.lang { margin-left: 20px; padding-bottom: 2px; }
.orb {
  position: absolute;
  left: 16px;
  top: 22px;
  width: 40px;
  height: 40px;
  border-radius: 50%;
  border: 1px solid #4d7aa0;
  background: #a9c6dc;
}
.status-right { display: flex; align-items: center; height: 100%; margin-left: auto; }
.note { gap: 5px; padding-bottom: 2px; }
.comment { margin: 0 25px 0 27px; }
.view { width: 50px; height: 100%; justify-content: center; }
.view.on { background: #cdcfcd; }
.ime {
  display: flex;
  align-items: center;
  gap: 8px;
  width: 196px;
  height: 100%;
  margin-left: 7px;
  padding-left: 3px;
  border: 1px solid #b9c3cc;
  background: linear-gradient(90deg, #fff, #fff 60%, #e3eff9);
}
.ime b { color: #4a8fd2; font-size: 20px; font-weight: 700; }
.zoom {
  appearance: none;
  width: 48px;
  height: 1px;
  margin: 0 5px 0 0;
  background: #999;
}
.zoom::-webkit-slider-thumb { appearance: none; width: 0; height: 0; }
.pct { margin: 0 18px 0 19px; padding-bottom: 2px; }
```
